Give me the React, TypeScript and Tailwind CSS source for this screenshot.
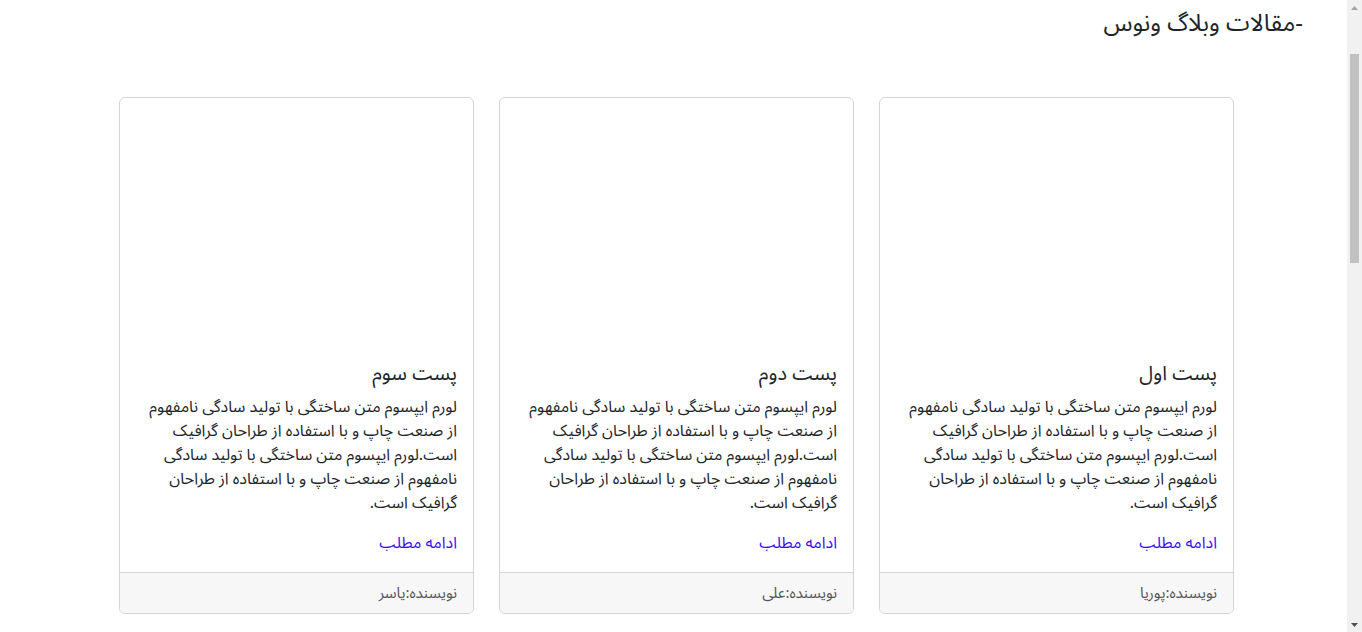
import React from 'react';

type Post = {
  id: number;
  title: string;
  author: string;
};

const posts: Post[] = [
  { id: 1, title: 'پست اول', author: 'پوریا' },
  { id: 2, title: 'پست دوم', author: 'علی' },
  { id: 3, title: 'پست سوم', author: 'یاسر' },
];

const body =
  'لورم ایپسوم متن ساختگی با تولید سادگی نامفهوم از صنعت چاپ و با استفاده از طراحان گرافیک است.لورم ایپسوم متن ساختگی با تولید سادگی نامفهوم از صنعت چاپ و با استفاده از طراحان گرافیک است.';

function PostCard({ post }: { post: Post }) {
  return (
    <div className="w-[355px] flex flex-col border border-[#d4d4d4] rounded-[6px] bg-white overflow-hidden">
      <div className="h-[250px]" />
      <div className="px-4 pt-[14px] pb-[17px]">
        <h5 className="text-[20px] leading-[24px] mb-[9px] text-[#212529]">{post.title}</h5>
        <p className="text-[16px] leading-[24px] mb-4 text-[#212529]">{body}</p>
        <a href="#" className="text-[16px] leading-[24px] text-[#3d0cff]">ادامه مطلب</a>
      </div>
      <div className="border-t border-[#d4d4d4] bg-[#f7f7f7] px-4 py-2 text-[15px] leading-[24px] text-[#555]">
        نویسنده:{post.author}
      </div>
    </div>
  );
}

// browser scrollbar as seen in the screenshot
function Scrollbar() {
  return (
    <div className="w-[15px] h-[632px] bg-[#f1f1f1] flex flex-col items-center shrink-0">
      <div className="h-[15px] flex items-center justify-center">
        <svg width="7" height="4" viewBox="0 0 7 4"><path d="M0 4 L3.5 0 L7 4 Z" fill="#a3a3a3" /></svg>
      </div>
      <div className="mt-[39px] w-[9px] h-[209px] bg-[#c1c1c1]" />
      <div className="flex-1" />
      <div className="h-[15px] flex items-center justify-center">
        <svg width="7" height="4" viewBox="0 0 7 4"><path d="M0 0 L7 0 L3.5 4 Z" fill="#505050" /></svg>
      </div>
    </div>
  );
}

export default function App() {
  return (
    <div className="flex h-[632px] overflow-hidden bg-white">
      <div dir="rtl" className="w-[1347px] shrink-0 font-['Noto_Sans_Arabic','DejaVu_Sans',sans-serif] text-[#212529]">
        <h2 className="pr-[44px] pt-[6px] text-[24px] leading-[36px]">-مقالات وبلاگ ونوس</h2>
        <div className="pr-[113px] mt-[55px] flex gap-[25px]">
          {posts.map(p => (
            <PostCard key={p.id} post={p} />
          ))}
        </div>
      </div>
      <Scrollbar />
    </div>
  );
}
